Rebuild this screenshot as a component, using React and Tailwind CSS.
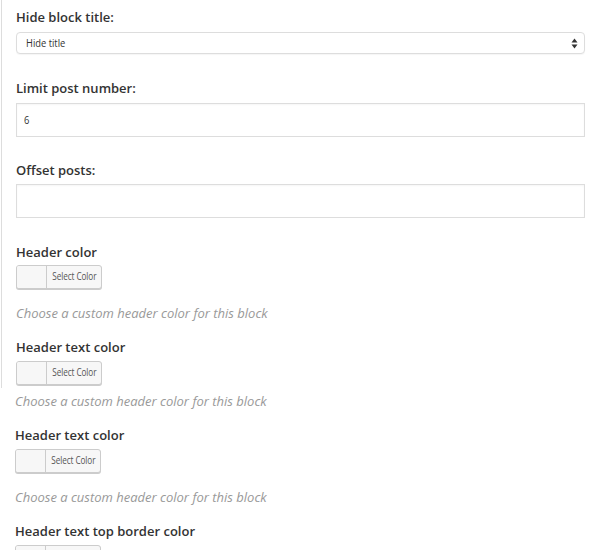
import React from "react";

const font = { fontFamily: '"Open Sans", "Liberation Sans", sans-serif' };

function Label({ children, className = "" }) {
  return (
    <div className={`text-[13px] leading-[18px] font-semibold text-[#333333] ${className}`}>
      {children}
    </div>
  );
}

function ColorButton({ className = "" }) {
  return (
    <div className={`flex h-[24px] w-[86px] rounded-[3px] border border-[#cccccc] bg-[#f7f7f7] shadow-[0_1px_0_#cccccc] overflow-hidden ${className}`}>
      <div className="w-[30px] h-full border-r border-[#cccccc] bg-[#f7f7f7]" />
      <div className="flex-1 flex items-center justify-center text-[10.5px] text-[#555555] overflow-hidden">
        <span className="inline-block scale-x-[0.78] whitespace-nowrap tracking-[-0.1px]">Select Color</span>
      </div>
    </div>
  );
}

function Help({ className = "" }) {
  return (
    <div className={`text-[13px] leading-[18px] italic text-[#999999] ${className}`}>
      Choose a custom header color for this block
    </div>
  );
}

export default function App() {
  return (
    <div className="w-[600px] h-[550px] bg-white overflow-hidden" style={font}>
      <div className="ml-[1px] border-l border-[#dddddd] pl-[14px] pr-[14px] pt-[8px] pb-[3px]">
        <Label>Hide block title:</Label>
        <div className="mt-[6px] h-[22px] w-[569px] rounded-[4px] border border-[#dddddd] bg-white flex items-center justify-between pl-[9px] pr-[6px] shadow-[0_1px_1px_rgba(0,0,0,0.04)]">
          <span className="inline-block origin-left scale-x-[0.85] text-[11px] text-[#333333] whitespace-nowrap">Hide title</span>
          <svg width="7" height="11" viewBox="0 0 7 11">
            <path d="M3.5 0.5 L6.5 4.5 L0.5 4.5 Z" fill="#333" />
            <path d="M3.5 10.5 L6.5 6.5 L0.5 6.5 Z" fill="#333" />
          </svg>
        </div>

        <Label className="mt-[25px]">Limit post number:</Label>
        <div className="mt-[6px] h-[34px] w-[569px] border border-[#dddddd] bg-white flex items-center pl-[7px] shadow-[inset_0_1px_2px_rgba(0,0,0,0.04)]">
          <span className="inline-block origin-left scale-x-[0.85] text-[11px] text-[#333333]">6</span>
        </div>

        <Label className="mt-[24px]">Offset posts:</Label>
        <div className="mt-[5px] h-[34px] w-[569px] border border-[#dddddd] bg-white shadow-[inset_0_1px_2px_rgba(0,0,0,0.04)]" />

        <Label className="mt-[25px]">Header color</Label>
        <ColorButton className="mt-[4px]" />
        <Help className="mt-[15px]" />

        <Label className="mt-[16px]">Header text color</Label>
        <ColorButton className="mt-[5px]" />
      </div>

      <div className="pl-[15px] pr-[14px]">
        <Help className="mt-[4px]" />

        <Label className="mt-[16px]">Header text color</Label>
        <ColorButton className="mt-[5px]" />
        <Help className="mt-[15px]" />

        <Label className="mt-[16px]">Header text top border color</Label>
        <ColorButton className="mt-[5px]" />
      </div>
    </div>
  );
}
